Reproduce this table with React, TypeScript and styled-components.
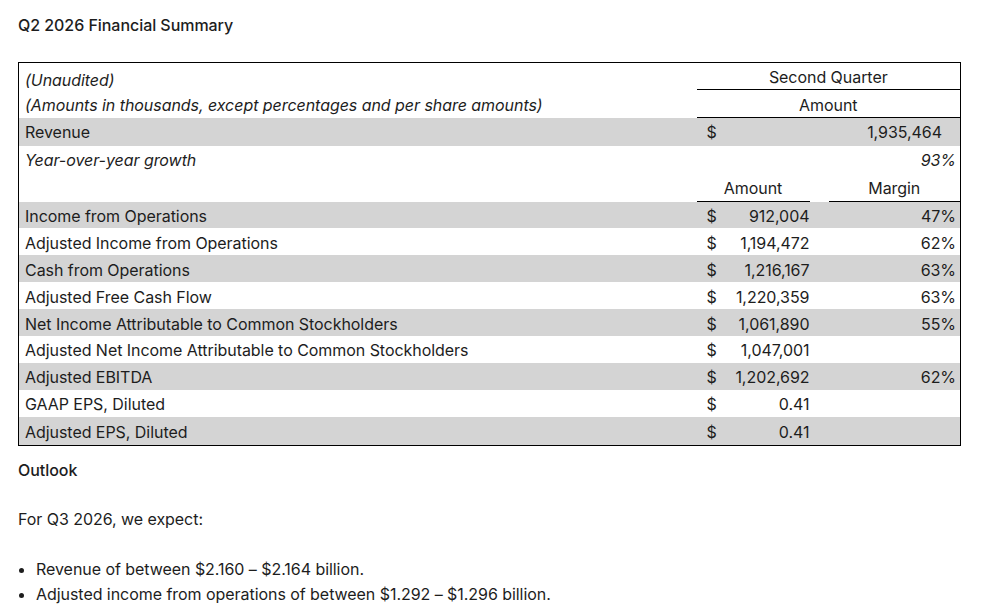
import React from "react";
import styled, { createGlobalStyle } from "styled-components";

const Global = createGlobalStyle`
  html, body { margin: 0; padding: 0; background: #ffffff; }
  body {
    font-family: Inter, "Liberation Sans", Arial, sans-serif;
    color: #1d1d1d;
    font-size: 16px;
  }
`;

const Page = styled.div`
  padding: 14px 25px 0 18px;
  display: flex;
  flex-direction: column;
`;

const Title = styled.h1`
  margin: 0;
  font-size: 16px;
  font-weight: 500;
  line-height: 22px;
  height: 22px;
  letter-spacing: -0.05px;
`;

const Table = styled.table`
  margin-top: 26px;
  width: 942px;
  border-collapse: collapse;
  border: 1px solid #000;
  font-size: 16px;
  letter-spacing: -0.05px;
  table-layout: fixed;
`;

const Row = styled.tr<{ $shade?: boolean; $h?: number }>`
  background: ${(p) => (p.$shade ? "#d4d4d4" : "#ffffff")};
  height: ${(p) => p.$h ?? 26.9}px;
`;

const Label = styled.td<{ $italic?: boolean; $top?: number }>`
  padding: ${(p) => p.$top ?? 2}px 6px 0;
  font-style: ${(p) => (p.$italic ? "italic" : "normal")};
  white-space: nowrap;
  line-height: 24px;
`;

const Notes = styled.td`
  padding: 0 6px;
  font-style: italic;
  white-space: nowrap;
  line-height: 25px;
  vertical-align: bottom;
`;

const Head = styled.td<{ $rule?: boolean }>`
  padding: 2px 0 0;
  text-align: center;
  line-height: 24px;
  border-bottom: ${(p) => (p.$rule ? "1px solid #000" : "none")};
`;

const Dollar = styled.td<{ $top?: number }>`
  padding: ${(p) => p.$top ?? 2}px 0 0 10px;
  text-align: left;
  line-height: 24px;
`;

const Num = styled.td<{ $italic?: boolean; $pad?: number; $top?: number }>`
  padding: ${(p) => p.$top ?? 2}px ${(p) => p.$pad ?? 0}px 0 0;
  text-align: right;
  line-height: 24px;
  font-style: ${(p) => (p.$italic ? "italic" : "normal")};
`;

const Gap = styled.td`
  padding: 0;
`;

const Heading = styled.p`
  margin: 13px 0 0;
  font-size: 16px;
  font-weight: 500;
  line-height: 22px;
  letter-spacing: -0.05px;
`;

const Para = styled.p`
  margin: 27px 0 0;
  line-height: 22px;
  letter-spacing: -0.05px;
`;

const List = styled.ul`
  margin: 27px 0 0;
  padding: 0 0 0 18px;
  list-style: disc;
  letter-spacing: -0.05px;
  li {
    line-height: 25px;
  }
`;

type Line = { label: string; amount: string; margin?: string };

const lines: Line[] = [
  { label: "Income from Operations", amount: "912,004", margin: "47%" },
  { label: "Adjusted Income from Operations", amount: "1,194,472", margin: "62%" },
  { label: "Cash from Operations", amount: "1,216,167", margin: "63%" },
  { label: "Adjusted Free Cash Flow", amount: "1,220,359", margin: "63%" },
  { label: "Net Income Attributable to Common Stockholders", amount: "1,061,890", margin: "55%" },
  { label: "Adjusted Net Income Attributable to Common Stockholders", amount: "1,047,001" },
  { label: "Adjusted EBITDA", amount: "1,202,692", margin: "62%" },
  { label: "GAAP EPS, Diluted", amount: "0.41" },
  { label: "Adjusted EPS, Diluted", amount: "0.41" },
];

export default function App() {
  return (
    <>
      <Global />
      <Page>
        <Title>Q2 2026 Financial Summary</Title>
        <Table>
          <colgroup>
            <col style={{ width: 678 }} />
            <col style={{ width: 24 }} />
            <col style={{ width: 89 }} />
            <col style={{ width: 19 }} />
            <col style={{ width: 132 }} />
          </colgroup>
          <tbody>
            <Row $h={27}>
              <Notes rowSpan={2}>
                (Unaudited)
                <br />
                (Amounts in thousands, except percentages and per share amounts)
              </Notes>
              <Head colSpan={4} $rule>Second Quarter</Head>
            </Row>
            <Row $h={28}>
              <Head colSpan={4} $rule>Amount</Head>
            </Row>
            <Row $shade $h={28}>
              <Label $top={1}>Revenue</Label>
              <Dollar $top={1}>$</Dollar>
              <Num colSpan={3} $pad={18} $top={1}>1,935,464</Num>
            </Row>
            <Row $h={28}>
              <Label $italic $top={0}>Year-over-year growth</Label>
              <Num colSpan={4} $italic $pad={4} $top={0}>93%</Num>
            </Row>
            <Row $h={28}>
              <Label />
              <Head colSpan={2} $rule>Amount</Head>
              <Gap />
              <Head $rule>Margin</Head>
            </Row>
            {lines.map((l, i) => (
              <Row key={l.label} $shade={i % 2 === 0} $h={i === lines.length - 1 ? 28.5 : undefined}>
                <Label>{l.label}</Label>
                <Dollar>$</Dollar>
                <Num>{l.amount}</Num>
                <Gap />
                <Num $pad={4}>{l.margin ?? ""}</Num>
              </Row>
            ))}
          </tbody>
        </Table>
        <Heading>Outlook</Heading>
        <Para>For Q3 2026, we expect:</Para>
        <List>
          <li>Revenue of between $2.160 – $2.164 billion.</li>
          <li>Adjusted income from operations of between $1.292 – $1.296 billion.</li>
        </List>
      </Page>
    </>
  );
}
